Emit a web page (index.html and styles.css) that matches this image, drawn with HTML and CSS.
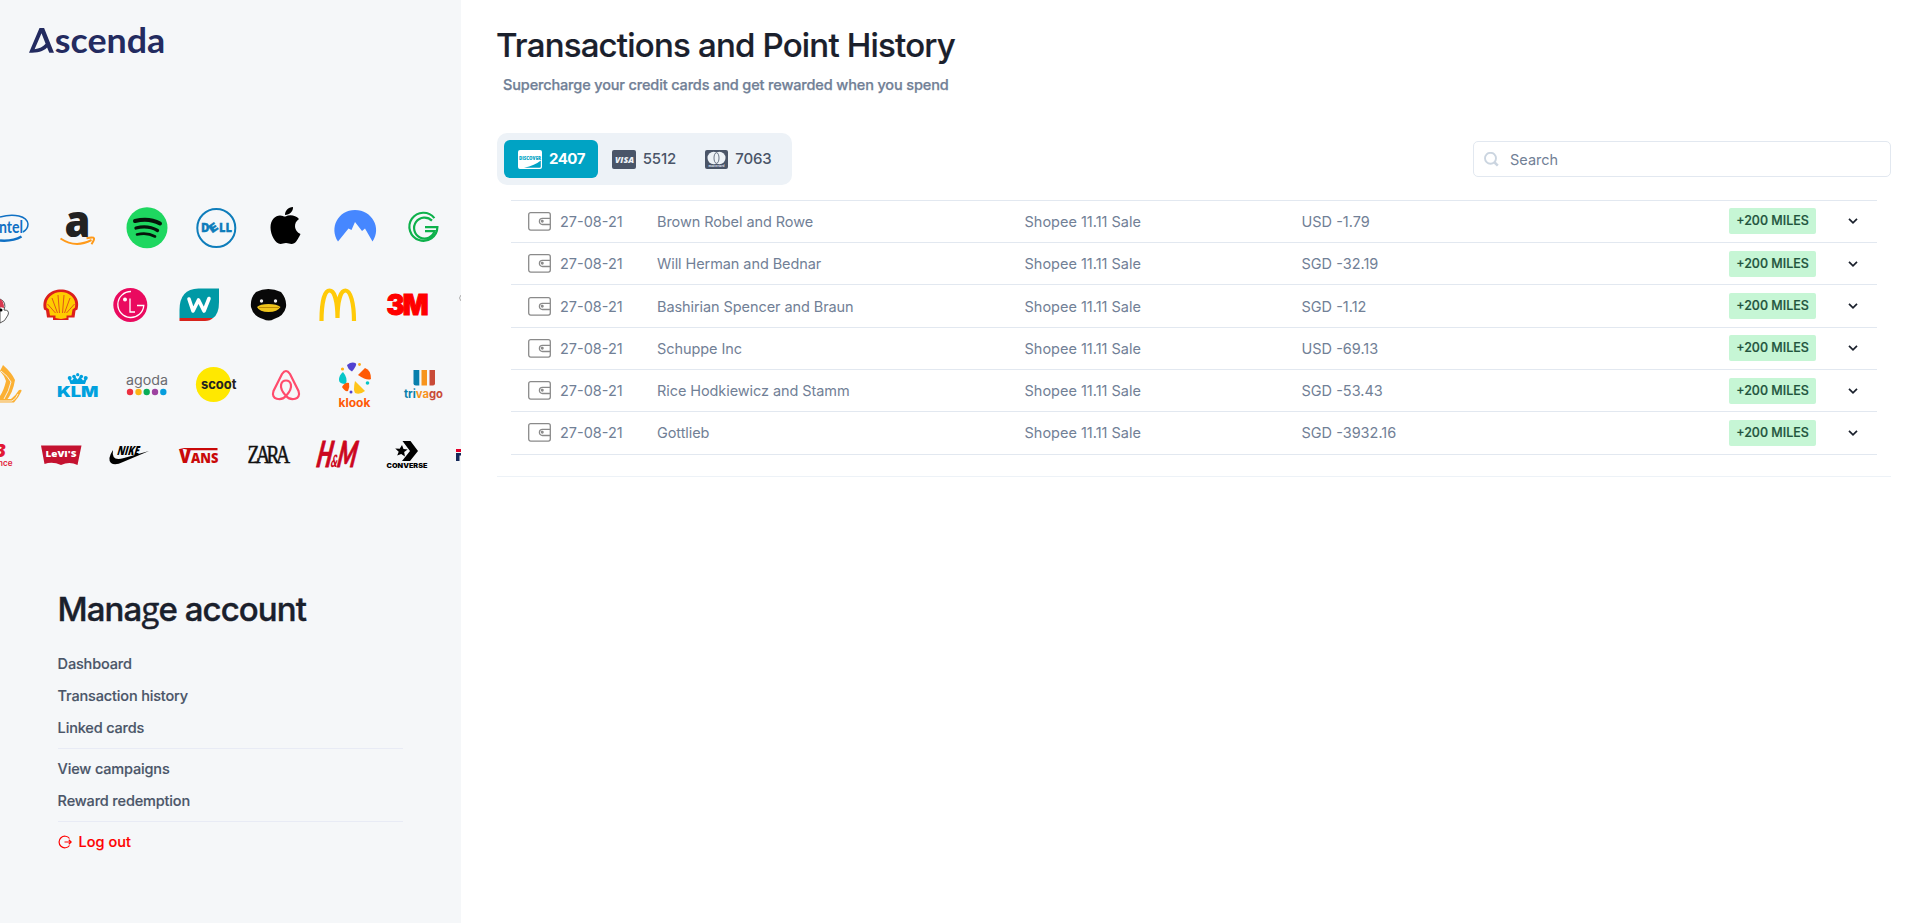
FILE: index.html
```html
<!DOCTYPE html>
<html lang="en">
<head>
<meta charset="utf-8">
<title>Ascenda – Transactions</title>
<link rel="stylesheet" href="styles.css">
</head>
<body>
<svg class="sprite" aria-hidden="true">
  <symbol id="wallet" viewBox="0 0 23 19"><g fill="none" stroke="#8a8a8a" stroke-width="1.3"><rect x=".7" y=".7" width="21.6" height="17.4" rx="2"/><path d="M22 6.300H14.500a3 3 0 0 0 0 6.200H22"/><circle cx="14.300" cy="9.300" r=".8"/></g></symbol>
  <symbol id="chevron" viewBox="0 0 10 6"><path d="M1 .8 5 4.800 9 .8" fill="none" stroke="#1a202c" stroke-width="1.700"/></symbol>
</svg>
<div class="page">
<aside class="sidebar">
  <svg class="logo" width="145" height="40" viewBox="25 20 145 40" role="img" aria-label="Ascenda">
    <path fill="#232b60" fill-rule="evenodd" d="M39.500 28h4.600L54 52.800h-4.700l-2.200-5.300c-4 4-9.500 5.300-18.100 5.300zM41.500 33.300 34.600 49.300c4.600-.7 8.600-2.600 11-5.600z"/>
    <text class="logo-text" x="54.800" y="52.500" textLength="110.500" lengthAdjust="spacingAndGlyphs">scenda</text>
  </svg>
  <svg class="brands" width="461" height="300" viewBox="0 190 461 300">
    <!-- first row -->
    <g fill="none" stroke="#0f70c4"><path stroke-width="1.500" d="M0 217C14 213 27 216 28 224q0 5-5 8"/><path stroke-width="2.500" d="M0 240.500q13 1 21.500-4"/></g>
    <text x="-1" y="233" textLength="24" lengthAdjust="spacingAndGlyphs" font-family="Lato" font-weight="700" font-size="17" fill="#0f70c4">ntel</text>
    <text x="64.500" y="236.500" textLength="26" lengthAdjust="spacingAndGlyphs" font-family="Open Sans" font-weight="800" font-size="45" fill="#222">a</text>
    <path d="M60.500 238.500q15 10 31 1.500M86.500 238.300q7-1.500 7.500 0t-2.500 6" fill="none" stroke="#ff9a1a" stroke-width="2"/>
    <circle cx="147" cy="227.700" r="20.500" fill="#1ed760"/>
    <g fill="none" stroke="#06140a" stroke-linecap="round"><path stroke-width="4" d="M135 221q14-3.500 25 2.500"/><path stroke-width="3.300" d="M136 228q12-3 21.500 2.500"/><path stroke-width="2.600" d="M137 234.500q10-2.500 18 2"/></g>
    <circle cx="216.300" cy="228" r="19" fill="none" stroke="#0e7dbb" stroke-width="2"/>
    <g font-family="Open Sans" font-weight="800" fill="#0e7dbb" stroke="#0e7dbb" stroke-width=".3" font-size="11.500"><text x="201" y="232">D</text><text transform="translate(211.800 233.800) rotate(-35)" font-size="11.500" textLength="9" lengthAdjust="spacingAndGlyphs">E</text><text x="219" y="232" textLength="13" lengthAdjust="spacingAndGlyphs">LL</text></g>
    <path d="M285.500 216.500c4-2 10-1.500 13.500 2.500-6 4-5 12 1.500 15-3 6-5 10-9 10-2 0-3-1-5.500-1s-3.500 1-5.500 1c-5 0-10-9-10-16.500 0-8 5-12 9.500-12 3 0 4 1.500 5.500 1zM285 215c0-4 3-8 8-8 .3 4-3 8-8 8z"/>
    <path d="M338 241.500C329 228 338 210 355 210s27 18 17.500 31.500l-7.500-13-3 2.500-7-9-3.500 8-3-1.500z" fill="#4687ff"/>
    <g fill="none" stroke="#0db14b" stroke-width="2.200"><path d="M434.400 218.100a14 14 0 1 0 3 9.100H425"/><path d="M432 220.600a10.500 10.500 0 1 0 2.600 10.600H425"/></g>
    <!-- second row -->
    <path d="M0 299q7 3 4 11 6 0 4 5-3 7-8 8z" fill="#fff" stroke="#444" stroke-width=".9"/><path d="M0 299q4 2 4 9l-4-1z" fill="#d83950"/><circle cx="1" cy="310" r="1.500"/>
    <path d="M53 320v-2.500h-6l-1-7-2-1C41 297 51 289.500 61 289.500S81 297 77.500 309.500l-2 1-1 7h-6v2.500z" fill="#dc1f1c"/>
    <path d="M55.500 318v-2.500H50l-1-6-2.500-2C45 298 53 292 61 292s16 6 14 15.500l-2.500 2-1 6H66.500v2.500L61 319z" fill="#fc0"/>
    <g stroke="#dc4a1c" stroke-width=".9" fill="none"><path d="M59.500 313 58 295M62.500 313 64 295M57.500 313 52 298M64.500 313 70 298M55.500 313 47.500 304M66.500 313 74.500 304"/></g>
    <circle cx="130.300" cy="305" r="17" fill="#ea0a5f"/><path d="M131 291.500a13 13 0 1 0 12.800 14h-6.800M130 298.500v13.500h5" fill="none" stroke="#fff" stroke-width="1.300"/><circle cx="125" cy="299.500" r="2" fill="#fff"/>
    <path d="M179.500 318v-8q0-21 19-21.500h20.500V302q0 12-6 16z" fill="#0099a5"/><path d="M179.500 318H213q-3 3-8 3h-25.500z" fill="#d6241c"/>
    <path d="m189 299 4 12 5.500-11 5.500 11 5-12.500" fill="none" stroke="#fff" stroke-width="3.600" stroke-linejoin="round" stroke-linecap="round"/>
    <path d="M256 292q12-6 25 0 6 7 5 15-2 9-12 12-5 3-11 0-10-3-12-12-1-9 5-15z" fill="#080808"/><circle cx="261.500" cy="301" r="1.700" fill="#eee"/><circle cx="275.500" cy="301" r="1.700" fill="#eee"/><path d="M257 307q3-3 11.500-3t12 3q-3 5-12 5t-11.500-5z" fill="#efc51c"/><path d="M259 307.500h20" stroke="#ae7b00" stroke-width=".8"/>
    <path d="M321.500 321c0-18 3-30.500 8-30.500 5 0 8 11 8 27.500 0-16.500 3-27.500 8-27.500s8.500 12.500 8.500 30.500" fill="none" stroke="#ffca08" stroke-width="4.200"/>
    <text x="386.500" y="314.700" textLength="40" lengthAdjust="spacingAndGlyphs" font-family="Inter" font-weight="900" font-size="28" letter-spacing="-2" fill="#f00" stroke="#f00">3M</text>
    <path d="M461 295q-3 3 0 6" fill="none" stroke="#aaa"/>
    <!-- third row -->
    <path d="M3 365q9 8 12 15-2 13-9 21l-6-1v-4q4-6 6-15-2-6-6-10zM0 399h11q5-4 8-9 3-1 2.500 1-3 7-7.500 11.500H0z" fill="#fbb034"/><path d="M1 371q7 5 10 11-2 9-7 17M0 401h12q4-2 6-7" fill="none" stroke="#f5f7f9" stroke-width=".9"/>
    <g fill="#00a1de"><path d="m68 377 4 3.500 3-4 2.500 3 2.500-3 3 4 4.500-3.500-2.500 7H70.500z"/><circle cx="69.700" cy="378" r="2"/><circle cx="85.700" cy="378" r="2"/><circle cx="74" cy="376.500" r="1.800"/><circle cx="81.300" cy="376.500" r="1.800"/><circle cx="77.700" cy="374.700" r="1.600"/><text x="57" y="397" textLength="41.500" lengthAdjust="spacingAndGlyphs" font-family="Inter" font-weight="900" font-size="14">KLM</text></g>
    <text x="126" y="384.500" textLength="42" lengthAdjust="spacingAndGlyphs" font-family="Inter" font-weight="400" font-size="13" fill="#6c6c70">agoda</text>
    <circle cx="130" cy="392" r="3.200" fill="#ed3040"/><circle cx="138.500" cy="392" r="3.200" fill="#fcb514"/><circle cx="146.700" cy="392" r="3.200" fill="#09ad57"/><circle cx="155" cy="392" r="3.200" fill="#9d42a0"/><circle cx="163.300" cy="392" r="3.200" fill="#069ddd"/>
    <circle cx="213.500" cy="384.500" r="17.600" fill="#ffe800"/><text x="201" y="388.500" textLength="35.500" lengthAdjust="spacingAndGlyphs" font-family="Inter" font-weight="700" font-size="13" fill="#222">scoot</text>
    <path d="M286 396c-9-10-4-15.500 0-15.500s9 5.500 0 15.500c-5 5.500-15.500 3.500-12.500-5l8.500-17q4-6 8 0l8.500 17c3 8.500-7.500 10.500-12.500 5z" fill="none" stroke="#ff4b6c" stroke-width="2.200"/>
    <path d="M347 365q5-4 9-1.500 1 2-4 8-4-2-5-6.500z" fill="#5142d0"/><path d="m358 375 7-7q6 2 6 11-4 2-13-4z" fill="#ff5a05"/><path d="M343 372q5 6 3 12-7 0-7-4 0-5 4-8z" fill="#06c6c8"/><path d="m355 381 10 10q-5 4-10 2-2-3 0-12z" fill="#ffc51a"/><path d="M342 387q3-5 7-4 1 4-1 8-3 1-6-4z" fill="#ff5a05"/><circle cx="342.500" cy="369" r="1.600" fill="#ffae13"/><circle cx="359.500" cy="364.500" r="1.400" fill="#ffae13"/><circle cx="367.500" cy="383" r="1.800" fill="#06c6c8"/><circle cx="351" cy="392" r="1.500" fill="#5142d0"/>
    <text x="338.500" y="407" textLength="32" lengthAdjust="spacingAndGlyphs" font-family="Inter" font-weight="700" font-size="11.500" fill="#ff5a05">klook</text>
    <path d="M413.500 370h5.800v15.500h-3.500q-2.300 0-2.300-2z" fill="#087fac"/><path d="M421.500 370h5.500v15.500h-5.500z" fill="#f7941d"/><path d="M429.500 370h5.500v13.500q0 2-2 2h-3.500z" fill="#c94b38"/>
    <text x="404" y="397.500" textLength="39" lengthAdjust="spacingAndGlyphs" font-family="Inter" font-weight="700" font-size="12"><tspan fill="#087fac">tri</tspan><tspan fill="#f7941d">va</tspan><tspan fill="#c94b38">go</tspan></text>
    <!-- fourth row -->
    <text x="-6.500" y="457" font-family="Inter" font-weight="900" font-style="italic" font-size="18" fill="#e21836">B</text><text x="-2" y="466" font-family="Inter" font-weight="600" font-size="7.500" textLength="14.500" lengthAdjust="spacingAndGlyphs" fill="#e21836">nce</text>
    <path d="M41 445.500h40.500l-4 19.500q-8-4-16.500 0-8.500-4-16.500-1z" fill="#c41230"/><text x="45.500" y="457" textLength="31" lengthAdjust="spacingAndGlyphs" font-family="Open Sans" font-weight="800" font-size="9.500" fill="#fff">LeVI'S</text>
    <path d="M113 450q-6 9-2 13 4 3 12-1l26-11-25 7q-13 4-11-8z"/><text transform="translate(116.500 455) skewX(-16)" textLength="22" lengthAdjust="spacingAndGlyphs" font-family="Open Sans" font-weight="800" font-size="12.500">NIKE</text>
    <path d="M179.500 448H217.500v2.300H190.500z" fill="#c90909"/><text x="179" y="462.500" textLength="39.500" lengthAdjust="spacingAndGlyphs" font-family="Open Sans" font-weight="800" fill="#c90909"><tspan font-size="19.500">V</tspan><tspan font-size="14.500">ANS</tspan></text>
    <text x="247.500" y="462.500" textLength="39" lengthAdjust="spacingAndGlyphs" font-family="Liberation Serif" font-size="25" letter-spacing="-4.500" fill="#111" stroke="#111" stroke-width=".5">ZARA</text>
    <text transform="translate(315.500 467) skewX(-10)" textLength="39" lengthAdjust="spacingAndGlyphs" font-family="Lato" font-weight="900" font-style="italic" font-size="36" letter-spacing="-1" fill="#cc071e" stroke="#cc071e" stroke-width=".8">H<tspan font-size="17" stroke="none">&amp;</tspan>M</text>
    <path d="M402.500 441h8l7.500 10-8 10h-8l8-10zM402 445l1.500 4 4.200.6-3.500 2.400.7 4.500-3.700-2.600-4 1.600 1.500-3.700-3.500-3.300 4.500.2z"/>
    <text x="386.500" y="467.700" textLength="41" lengthAdjust="spacingAndGlyphs" font-family="Inter" font-weight="900" font-size="6.500">CONVERSE</text>
    <path d="M456 449h5v3h-5z" fill="#e4002b"/><path d="M456 453h5v2.500h-1.500v5.500H456z" fill="#14285a"/>
  </svg>
  <nav class="account">
    <h2 class="account-title">Mana<span class="looped-g">g</span>e account</h2>
    <a>Dashboard</a><a>Transaction history</a><a>Linked cards</a>
    <hr>
    <a>View campaigns</a><a>Reward redemption</a>
    <hr>
    <a class="logout"><svg width="14" height="14" viewBox="0 0 14 14"><path d="M11.500 3.500a5.800 5.800 0 1 0 0 7M6.500 7h6.700M10.800 4.800 13.200 7l-2.400 2.200" fill="none" stroke="currentColor" stroke-width="1.200"/></svg><span>Log out</span></a>
  </nav>
</aside>
<main class="content">
  <h1 class="title">Transactions and Point History</h1>
  <p class="subtitle">Supercharge your credit cards and get rewarded when you spend</p>
  <div class="toolbar">
    <div class="tabs">
      <div class="tab active"><svg width="24" height="19" viewBox="0 0 24 19"><path fill="#fff" fill-rule="evenodd" d="M2 0h20q2 0 2 2v15q0 2-2 2H2q-2 0-2-2V2q0-2 2-2zM6 17.700h15.500q1.300 0 1.300-1.200v-6Q17 15.500 6 17.700z"/><text class="card-mark" x="1" y="9.500" textLength="22" lengthAdjust="spacingAndGlyphs" font-size="5.500" fill="#00a3c4">DISCOVER</text></svg><span>2407</span></div>
      <div class="tab"><svg width="24" height="19" viewBox="0 0 24 19"><rect width="24" height="19" rx="2" fill="#4a5568"/><text class="card-mark" x="3" y="13" textLength="19" lengthAdjust="spacingAndGlyphs" font-size="9.500" font-style="italic" fill="#edf2f7">VISA</text></svg><span>5512</span></div>
      <div class="tab last"><svg width="23" height="19" viewBox="0 0 23 19"><rect width="23" height="19" rx="2" fill="#4a5568"/><g fill="#edf2f7"><circle cx="8.700" cy="8" r="6.200"/><circle cx="14.300" cy="8" r="6.200"/></g><ellipse cx="11.500" cy="8" rx="2.500" ry="5.300" fill="#edf2f7" stroke="#4a5568" stroke-width=".8"/><text class="card-mark" x="3.500" y="17" textLength="16" lengthAdjust="spacingAndGlyphs" font-size="3" fill="#cbd5e0">mastercard</text></svg><span>7063</span></div>
    </div>
    <div class="search"><svg width="15" height="15" viewBox="0 0 15 15"><g fill="none" stroke="#cbd5e0" stroke-width="1.900"><circle cx="6.500" cy="6.300" r="5.500"/><path stroke-width="2.500" d="m10.600 10.500 3.200 3.200"/></g></svg><span>Search</span></div>
  </div>
  <div class="table">
    <div class="row"><svg class="wallet"><use href="#wallet"/></svg><span>27-08-21</span><span class="merchant">Brown Robel and Rowe</span><span>Shopee 11.11 Sale</span><span>USD -1.79</span><b class="badge">+200 MILES</b><svg class="chevron"><use href="#chevron"/></svg></div>
    <div class="row"><svg class="wallet"><use href="#wallet"/></svg><span>27-08-21</span><span class="merchant">Will Herman and Bednar</span><span>Shopee 11.11 Sale</span><span>SGD -32.19</span><b class="badge">+200 MILES</b><svg class="chevron"><use href="#chevron"/></svg></div>
    <div class="row"><svg class="wallet"><use href="#wallet"/></svg><span>27-08-21</span><span class="merchant">Bashirian Spencer and Braun</span><span>Shopee 11.11 Sale</span><span>SGD -1.12</span><b class="badge">+200 MILES</b><svg class="chevron"><use href="#chevron"/></svg></div>
    <div class="row"><svg class="wallet"><use href="#wallet"/></svg><span>27-08-21</span><span class="merchant">Schuppe Inc</span><span>Shopee 11.11 Sale</span><span>USD -69.13</span><b class="badge">+200 MILES</b><svg class="chevron"><use href="#chevron"/></svg></div>
    <div class="row"><svg class="wallet"><use href="#wallet"/></svg><span>27-08-21</span><span class="merchant">Rice Hodkiewicz and Stamm</span><span>Shopee 11.11 Sale</span><span>SGD -53.43</span><b class="badge">+200 MILES</b><svg class="chevron"><use href="#chevron"/></svg></div>
    <div class="row"><svg class="wallet"><use href="#wallet"/></svg><span>27-08-21</span><span class="merchant">Gottlieb</span><span>Shopee 11.11 Sale</span><span>SGD -3932.16</span><b class="badge">+200 MILES</b><svg class="chevron"><use href="#chevron"/></svg></div>
  </div>
</main>
</div>
</body>
</html>
```
FILE: styles.css
```css
* { box-sizing: border-box; }
body { margin: 0; font-family: Inter, "Liberation Sans", sans-serif; font-size: 15px; color: #1a202c; background: #fff; }
.sprite { display: none; }
svg { display: block; flex: none; }
.page { display: flex; height: 923px; overflow: hidden; }
.sidebar { width: 461px; flex: none; background: #f5f7f9; padding-top: 20px; overflow: hidden; }
.logo { margin-left: 25px; }
.logo-text { font: 700 34px Lato, sans-serif; fill: #232b60; }
.brands { margin-top: 130px; }
.account { padding: 99px 57.600px 0; display: flex; flex-direction: column; }
.account-title { margin: 0 0 19px; height: 40px; line-height: 40px; font-size: 33px; font-weight: 500; letter-spacing: -.92px; white-space: nowrap; -webkit-text-stroke: .4px; }
.looped-g { font-family: "Open Sans", sans-serif; }
.account a { height: 32px; line-height: 32px; font-size: 14.500px; font-weight: 500; letter-spacing: -.16px; color: #4a5568; -webkit-text-stroke: .15px; }
.account hr { width: 345px; height: 1px; margin: 4px 0; border: 0; background: #e8ebf5; }
.account .logout { display: flex; align-items: center; gap: 7px; color: #f00; letter-spacing: 0; }
.content { flex: 1; padding: 22px 29px 0 36px; }
.title { margin: 0 0 0 -1px; height: 47px; line-height: 47px; font-size: 33px; font-weight: 500; white-space: nowrap; letter-spacing: -.8px; -webkit-text-stroke: .2px; }
.subtitle { margin: 6px 0 0 6px; height: 20px; line-height: 20px; font-size: 14.500px; font-weight: 500; letter-spacing: -.14px; color: #718096; -webkit-text-stroke: .25px; }
.toolbar { display: flex; justify-content: space-between; align-items: center; height: 52px; margin-top: 38px; }
.tabs { width: 295px; height: 52px; padding: 7px; display: flex; background: #edf2f7; border-radius: 10px; }
.tab { width: 94px; height: 38px; padding-left: 14px; display: flex; align-items: center; gap: 7px; border-radius: 6px; font-size: 15px; font-weight: 500; letter-spacing: -.15px; color: #4a5568; }
.tab span { padding-bottom: 1px; }
.tab.active { background: #00a3c4; color: #fff; font-weight: 700; letter-spacing: -.5px; }
.tab.last { padding-left: 14px; }
.card-mark { font-family: "Open Sans", sans-serif; font-weight: 800; letter-spacing: 0; }
.search { width: 418px; height: 36px; padding-left: 10px; display: flex; align-items: center; gap: 11px; border: 1px solid #e2e8f0; border-radius: 5px; color: #718096; font-size: 14.500px; }
.table { margin-top: 14.700px; padding: 0 14px 21.300px; border-bottom: 1px solid #edf2f7; }
.row { height: 42.330px; display: grid; grid-template-columns: 32px 97px 367.500px 277px 427.500px 87px 1fr; align-items: center; padding-left: 17px; border-top: 1px solid #e2e8f0; font-size: 14.500px; color: #718096; }
.row:last-child { height: 43.330px; border-bottom: 1px solid #e2e8f0; }
.merchant { letter-spacing: -.08px; }
.wallet { width: 23px; height: 19px; }
.badge { height: 26px; line-height: 26px; text-align: center; border-radius: 2px; background: #c6f6d5; color: #22543d; font-size: 12.500px; font-weight: 500; -webkit-text-stroke: .2px; }
.chevron { width: 10px; height: 6px; margin-left: 32px; }
```
